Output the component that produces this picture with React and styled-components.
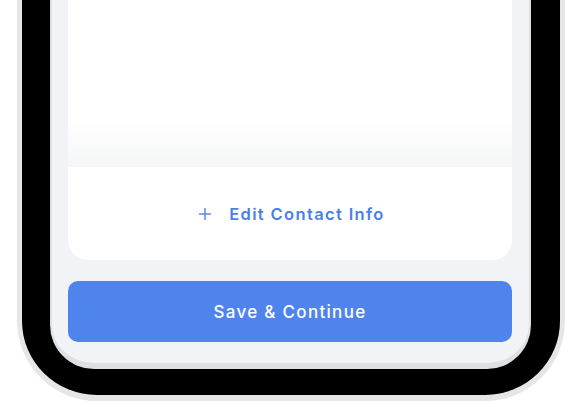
import React from "react";
import styled, { createGlobalStyle } from "styled-components";

const Global = createGlobalStyle`
  html, body { margin: 0; padding: 0; background: #ffffff; }
  body { font-family: "Inter", "Liberation Sans", sans-serif; }
  #root { width: 584px; height: 412px; overflow: hidden; }
`;

const Page = styled.div`
  width: 584px;
  height: 412px;
  padding-left: 17px;
  box-sizing: border-box;
  background: #ffffff;
`;

const Frame = styled.div`
  width: 548px;
  box-sizing: border-box;
  background: #000000;
  border: 5px solid #e5e6e6;
  border-top: 0;
  border-bottom-width: 6px;
  border-radius: 0 0 80px 80px;
  padding: 0 29px 26px 28px;
`;

const Screen = styled.div`
  background: #f2f3f7;
  border: 2px solid #dfe0e3;
  border-top: 0;
  border-bottom-width: 6px;
  border-radius: 0 0 44px 44px;
  padding: 0 17px 21px 16px;
  display: flex;
  flex-direction: column;
  gap: 21px;
`;

const Card = styled.div`
  height: 260px;
  background: #ffffff;
  border-radius: 0 0 20px 20px;
  display: flex;
  flex-direction: column;
  overflow: hidden;
`;

const Scroll = styled.div`
  flex: 1;
  background: linear-gradient(
    to bottom,
    #ffffff 0%,
    #ffffff 72%,
    #f5f6f7 100%
  );
`;

const Footer = styled.div`
  height: 93px;
  display: flex;
  align-items: center;
  justify-content: center;
`;

const LinkButton = styled.button`
  display: flex;
  align-items: center;
  gap: 18px;
  border: 0;
  background: transparent;
  padding: 0 0 0 4px;
  color: #4a7fe8;
  font-family: "Inter", "Liberation Sans", sans-serif;
  font-size: 16.5px;
  font-weight: 600;
  letter-spacing: 1.35px;
  cursor: pointer;
`;

const PrimaryButton = styled.button`
  height: 61px;
  border: 0;
  border-radius: 10px;
  background: #4f84ec;
  color: #ffffff;
  font-family: "Inter", "Liberation Sans", sans-serif;
  font-size: 17px;
  font-weight: 500;
  letter-spacing: 1.3px;
  cursor: pointer;
`;

const PlusIcon = () => (
  <svg width="12" height="12" viewBox="0 0 12 12" fill="none">
    <path d="M6 0v12M0 6h12" stroke="#5a8aea" strokeWidth="1.5" />
  </svg>
);

export default function App() {
  return (
    <>
      <Global />
      <Page>
        <Frame>
          <Screen>
            <Card>
              <Scroll />
              <Footer>
                <LinkButton>
                  <PlusIcon />
                  Edit Contact Info
                </LinkButton>
              </Footer>
            </Card>
            <PrimaryButton>Save &amp; Continue</PrimaryButton>
          </Screen>
        </Frame>
      </Page>
    </>
  );
}
